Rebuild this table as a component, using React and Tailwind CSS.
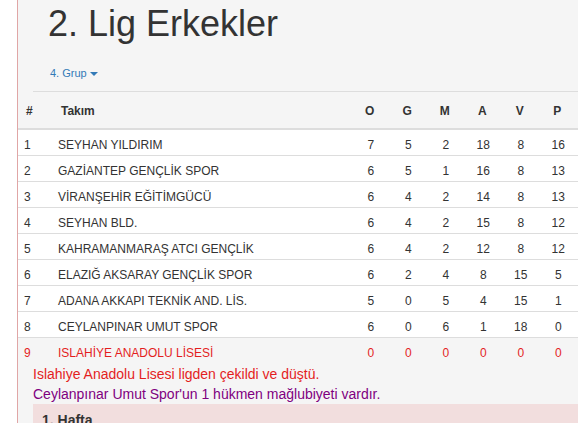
import React from 'react';

const teams = [
    {no: 1, name: 'SEYHAN YILDIRIM', o: 7, g: 5, m: 2, a: 18, v: 8, p: 16},
    {no: 2, name: 'GAZİANTEP GENÇLİK SPOR', o: 6, g: 5, m: 1, a: 16, v: 8, p: 13},
    {no: 3, name: 'VİRANŞEHİR EĞİTİMGÜCÜ', o: 6, g: 4, m: 2, a: 14, v: 8, p: 13},
    {no: 4, name: 'SEYHAN BLD.', o: 6, g: 4, m: 2, a: 15, v: 8, p: 12},
    {no: 5, name: 'KAHRAMANMARAŞ ATCI GENÇLİK', o: 6, g: 4, m: 2, a: 12, v: 8, p: 12},
    {no: 6, name: 'ELAZIĞ AKSARAY GENÇLİK SPOR', o: 6, g: 2, m: 4, a: 8, v: 15, p: 5},
    {no: 7, name: 'ADANA AKKAPI TEKNİK AND. LİS.', o: 5, g: 0, m: 5, a: 4, v: 15, p: 1},
    {no: 8, name: 'CEYLANPINAR UMUT SPOR', o: 6, g: 0, m: 6, a: 1, v: 18, p: 0},
];

const cols = 'grid grid-cols-[35px_1fr_repeat(6,37.5px)_2px]';

// one row of the standings table
const Row = ({team, out}) => (
    <div
        className={`${cols} h-[26px] leading-[17px] pt-[7px] ${
            out ? 'text-[#e41e1e] h-[25px]' : 'bg-white border-b border-[#dddddd] text-[#333333]'
        }`}
    >
        <div className="pl-[6px]">{team.no}</div>
        <div className="pl-[5px] whitespace-nowrap">{team.name}</div>
        <div className="text-center pl-[2px]">{team.o}</div>
        <div className="text-center pl-[2px]">{team.g}</div>
        <div className="text-center pl-[2px]">{team.m}</div>
        <div className="text-center pl-[2px]">{team.a}</div>
        <div className="text-center pl-[2px]">{team.v}</div>
        <div className="text-center pl-[2px]">{team.p}</div>
        <div></div>
    </div>
);

const App = () => {
    return (
        <div className="flex w-[578px] h-[423px] overflow-hidden bg-white font-['Liberation_Sans',Arial,sans-serif] text-[#333333]">
            <div className="w-[17px] shrink-0"></div>
            <div className="flex-1 border-l border-[#e0a6a6] bg-[#f5f5f5] min-w-0">
                <h1 className="pl-[30px] pt-[4px] text-[36px] leading-[40px] font-normal text-[#333333]">
                    2. Lig Erkekler
                </h1>

                <div className="pl-[32px] mt-[21px] text-[11px] leading-[16px] text-[#337ab7]">
                    4. Grup
                    <span className="inline-block ml-[3px] w-0 h-0 align-middle border-t-[4px] border-t-[#337ab7] border-x-[4px] border-x-transparent"></span>
                </div>

                <div className="ml-[15px] mt-[10px] border-t border-[#dddddd]"></div>

                {/* Table header */}
                <div className={`${cols} h-[38px] items-center text-[12px] font-bold border-b-2 border-[#dddddd]`}>
                    <div className="pl-[8px] pt-[2px]">#</div>
                    <div className="pl-[8px] pt-[2px]">Takım</div>
                    <div className="text-center pt-[2px]">O</div>
                    <div className="text-center pt-[2px]">G</div>
                    <div className="text-center pt-[2px]">M</div>
                    <div className="text-center pt-[2px]">A</div>
                    <div className="text-center pt-[2px]">V</div>
                    <div className="text-center pt-[2px]">P</div>
                    <div></div>
                </div>

                {/* Table body */}
                <div className="text-[12px]">
                    {teams.map((team) => (
                        <Row key={team.no} team={team} />
                    ))}
                    <Row out team={{no: 9, name: 'ISLAHİYE ANADOLU LİSESİ', o: 0, g: 0, m: 0, a: 0, v: 0, p: 0}} />
                </div>

                <div className="pl-[15px] text-[14px] leading-[20px]">
                    <div className="text-[#e41e1e]">Islahiye Anadolu Lisesi ligden çekildi ve düştü.</div>
                    <div className="text-[#800080]">Ceylanpınar Umut Spor'un 1 hükmen mağlubiyeti vardır.</div>
                </div>

                <div className="ml-[15px] bg-[#f2dede] pl-[9px] pt-[6px] h-[60px]">
                    <div className="text-[14px] leading-[20px] font-bold text-[#333333]">1. Hafta</div>
                </div>
            </div>
        </div>
    );
};

export default App;
